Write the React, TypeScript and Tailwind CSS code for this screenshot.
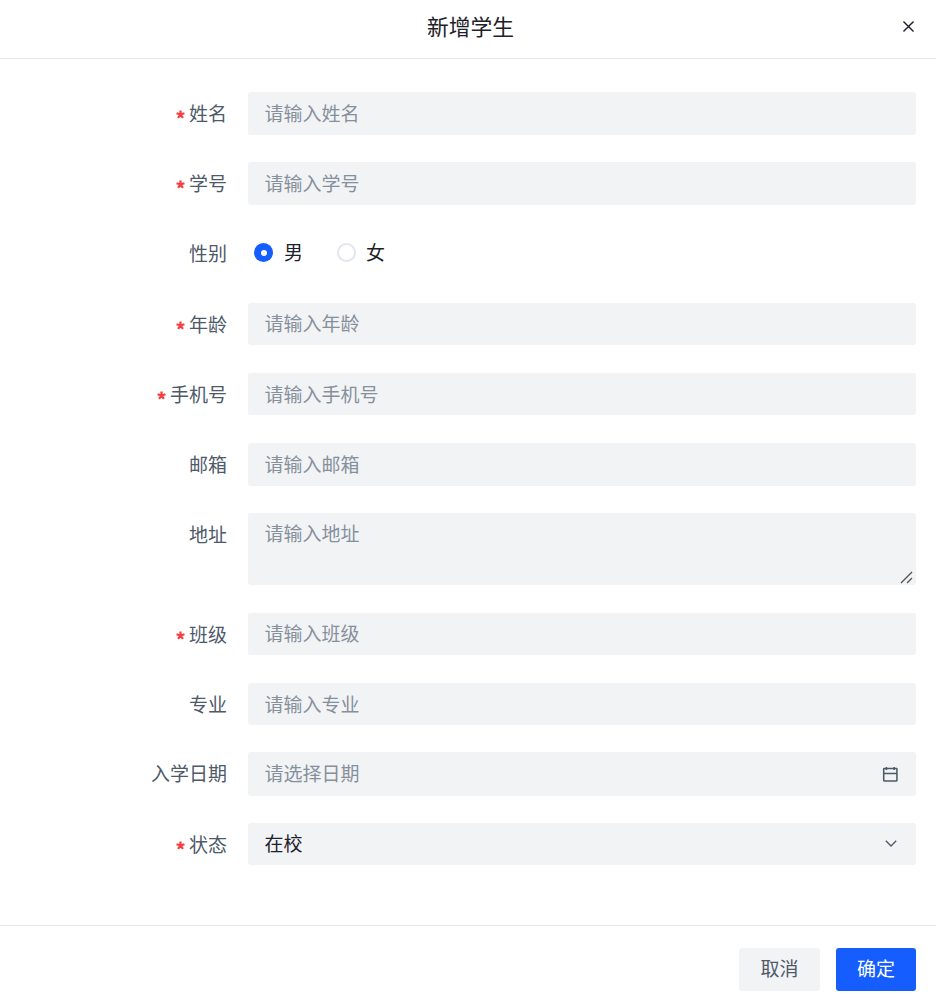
import React from 'react';

const inputClass =
  'w-full h-[42.67px] rounded-[3px] bg-[#f2f3f5] pl-[16.5px] pr-[17px] pb-[2px] text-[19px] text-[#1d2129] outline-none placeholder:text-[#86909c]';

const Star = () => (
  <svg viewBox="0 0 24 24" className="mr-[3.5px] inline-block h-[9px] w-[9px] align-[2px] text-[#f53f3f]" fill="none" stroke="currentColor" strokeWidth={6}>
    <path d="M12 1v11M12 12 1.5 8.6M12 12l10.5-3.4M12 12l-6.5 9M12 12l6.5 9" />
  </svg>
);

const Label = ({ text, required }: { text: string; required?: boolean }) => (
  <label className="w-[227px] shrink-0 text-right text-[19px] leading-[42.67px] text-[#4e5969]">
    {required && <Star />}
    {text}
  </label>
);

const TextRow = ({ label, required, placeholder }: { label: string; required?: boolean; placeholder: string }) => (
  <div className="mb-[27.5px] flex gap-[21px]">
    <Label text={label} required={required} />
    <input className={inputClass} placeholder={placeholder} />
  </div>
);

export default function App() {
  return (
    <div className="flex h-[1008px] w-[936px] flex-col bg-white font-['Noto_Sans_CJK_SC','Noto_Sans',sans-serif]">
      <header className="flex h-[59px] shrink-0 items-center border-b border-[#e5e6eb] pb-[5px] pl-[20px] pr-[19px]">
        <h2 className="flex-1 pl-[21px] text-center text-[21.8px] font-normal text-[#1d2129]">新增学生</h2>
        <svg viewBox="0 0 48 48" className="h-[17px] w-[17px] text-[#1d2129]" fill="none" stroke="currentColor" strokeWidth={4}>
          <path d="M9.857 9.858 24 24m0 0 14.142 14.142M9.858 38.142 24 24m0 0 14.142-14.142" />
        </svg>
      </header>

      <form className="flex-1 pr-[20px] pt-[33px]">
        <TextRow label="姓名" required placeholder="请输入姓名" />
        <TextRow label="学号" required placeholder="请输入学号" />

        <div className="mb-[27.5px] flex gap-[21px]">
          <Label text="性别" />
          <div className="flex h-[42.67px] items-center pb-[2px] pl-[6px] text-[19px] text-[#1d2129]">
            <span className="flex h-[19px] w-[19px] items-center justify-center rounded-full bg-[#165dff]">
              <span className="h-[6px] w-[6px] rounded-full bg-white" />
            </span>
            <span className="ml-[11px]">男</span>
            <span className="ml-[34px] h-[19px] w-[19px] rounded-full border-2 border-[#e5e6eb]" />
            <span className="ml-[10px]">女</span>
          </div>
        </div>

        <TextRow label="年龄" required placeholder="请输入年龄" />
        <TextRow label="手机号" required placeholder="请输入手机号" />
        <TextRow label="邮箱" placeholder="请输入邮箱" />

        <div className="mb-[27.5px] flex gap-[21px]">
          <Label text="地址" />
          <div className="relative w-full">
            <textarea
              className="block h-[72px] w-full resize-none rounded-[3px] bg-[#f2f3f5] pl-[16.5px] pr-[17px] pt-[5px] text-[19px] leading-[30px] text-[#1d2129] outline-none placeholder:text-[#86909c]"
              placeholder="请输入地址"
            />
            {/* resize grip */}
            <svg viewBox="0 0 14 14" className="absolute bottom-[1px] right-[2px] h-[14px] w-[14px] text-[#555]" fill="none" stroke="currentColor" strokeWidth={1.4}>
              <path d="M1 13 12 2M7 13l5-5" />
            </svg>
          </div>
        </div>

        <TextRow label="班级" required placeholder="请输入班级" />
        <TextRow label="专业" placeholder="请输入专业" />

        <div className="mb-[27px] mt-[-1px] flex gap-[21px]">
          <Label text="入学日期" />
          <div className="flex h-[44px] w-full items-center rounded-[3px] bg-[#f2f3f5] pl-[16.5px] pr-[16px]">
            <input className="min-w-0 flex-1 bg-transparent pb-[2px] text-[19px] outline-none placeholder:text-[#86909c]" placeholder="请选择日期" />
            <svg viewBox="0 0 48 48" className="h-[18.67px] w-[18.67px] shrink-0 text-[#4e5969]" fill="none" stroke="currentColor" strokeWidth={4}>
              <path d="M7 22h34M14 5v8m20-8v8M8 41h32a1 1 0 0 0 1-1V10a1 1 0 0 0-1-1H8a1 1 0 0 0-1 1v30a1 1 0 0 0 1 1Z" />
            </svg>
          </div>
        </div>

        <div className="flex gap-[21px]">
          <Label text="状态" required />
          <div className="flex h-[42px] w-full items-center justify-between rounded-[3px] bg-[#f2f3f5] pb-[1px] pl-[16.5px] pr-[17.5px] text-[19px] text-[#1d2129]">
            <span className="pb-[1px]">在校</span>
            <svg viewBox="0 0 48 48" className="h-[16px] w-[16px] shrink-0 text-[#4e5969]" fill="none" stroke="currentColor" strokeWidth={4}>
              <path d="M39.6 17.443 24.043 33 8.487 17.443" />
            </svg>
          </div>
        </div>
      </form>

      <footer className="flex h-[83px] shrink-0 justify-end gap-[16px] border-t border-[#e5e6eb] pr-[20px] pt-[22px]">
        <button className="h-[43px] w-[81px] rounded-[3px] bg-[#f2f3f5] pb-[2px] text-[19px] text-[#4e5969]">取消</button>
        <button className="h-[43px] w-[80px] rounded-[3px] bg-[#165dff] pb-[2px] text-[19px] text-white">确定</button>
      </footer>
    </div>
  );
}
